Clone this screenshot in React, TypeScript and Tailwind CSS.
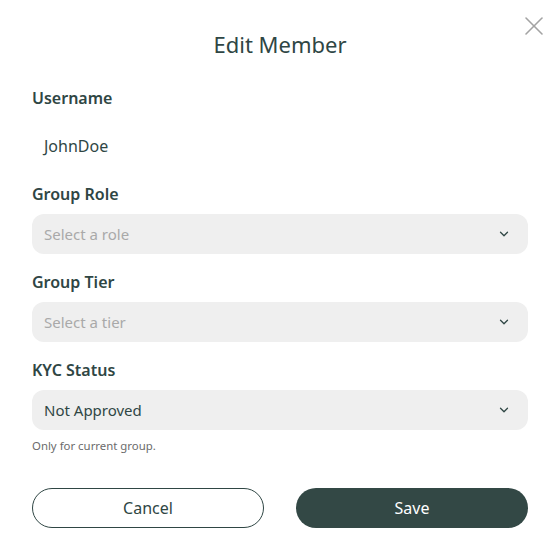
import { X, ChevronDown } from "lucide-react";

function Label({ children }: { children: React.ReactNode }) {
  return <p className="text-base font-semibold leading-6 text-[#2f4644]">{children}</p>;
}

function Select({ value, placeholder }: { value?: string; placeholder: string }) {
  return (
    <div className="mt-2 flex h-10 items-center justify-between rounded-[12px] bg-[#efefef] pl-3 pr-[17px]">
      <span className={`text-[15px] ${value ? "text-[#2f4644]" : "text-[#a9a9a9]"}`}>
        {value ?? placeholder}
      </span>
      <ChevronDown className="h-[14px] w-[14px] text-[#2f4644]" strokeWidth={2.2} />
    </div>
  );
}

export default function App() {
  return (
    <div
      className="relative h-[560px] w-[560px] bg-white px-8 pt-7"
      style={{ fontFamily: '"Noto Sans", sans-serif' }}
    >
      {/* Close */}
      <button aria-label="Close" className="absolute left-[518px] top-[10px] grid h-8 w-8 place-items-center text-[#a3a3a3]">
        <X className="h-8 w-8" strokeWidth={1.2} />
      </button>

      <h1 className="text-center text-[22px] leading-8 text-[#2f4644]">Edit Member</h1>

      <div className="mt-[26px]">
        <Label>Username</Label>
        <div className="mt-4 flex h-10 items-center px-3 text-base text-[#2f4644]">JohnDoe</div>
      </div>

      <div className="mt-4">
        <Label>Group Role</Label>
        <Select placeholder="Select a role" />
      </div>

      <div className="mt-4">
        <Label>Group Tier</Label>
        <Select placeholder="Select a tier" />
      </div>

      <div className="mt-4">
        <Label>KYC Status</Label>
        <Select placeholder="Select status" value="Not Approved" />
        <p className="mt-2 text-[11.4px] leading-4 text-[#6b6b6b]">Only for current group.</p>
      </div>

      <div className="mt-[34px] grid grid-cols-2 gap-8">
        <button className="h-10 rounded-full border border-[#2f4644] text-base text-[#2f4644]">
          Cancel
        </button>
        <button className="h-10 rounded-full bg-[#334845] text-base text-white">Save</button>
      </div>
    </div>
  );
}
